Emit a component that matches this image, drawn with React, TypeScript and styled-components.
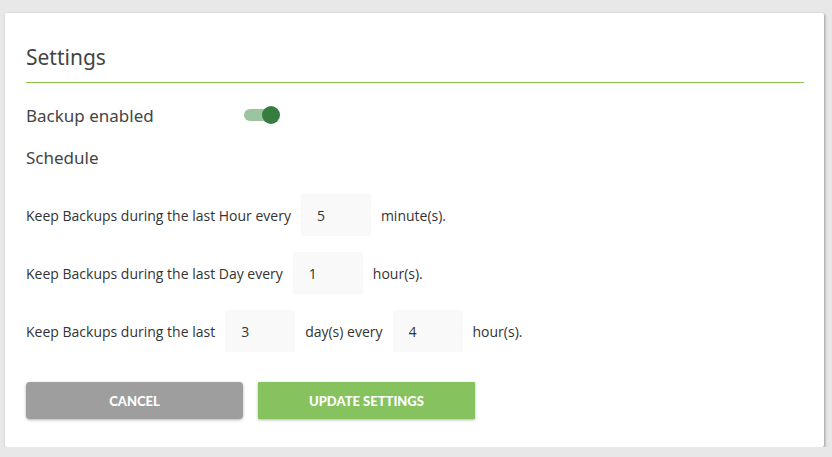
import React from 'react';
import styled, {createGlobalStyle} from "styled-components";

const GlobalStyle = createGlobalStyle`
  body {
    margin: 0;
    background: #e8e8e8;
    font-family: "Open Sans", sans-serif;
  }
`

const Card = styled.div`
  margin: 13px 0 0 5px;
  width: 819px;
  box-sizing: border-box;
  padding: 32px 20px 28px 21px;
  background: #fff;
  border-radius: 2px;
  box-shadow: 1px 1px 3px rgba(0, 0, 0, 0.35);
`
const Title = styled.h2`
  margin: 0;
  padding-bottom: 13px;
  font-family: "Noto Sans", sans-serif;
  font-weight: 400;
  font-size: 21px;
  line-height: 24px;
  color: #444;
  border-bottom: 1px solid #8bc34a;
`
const ToggleRow = styled.div`
  display: flex;
  align-items: center;
  height: 30px;
  margin-top: 17px;
`
const Label = styled.span`
  width: 218px;
  font-family: "Noto Sans", sans-serif;
  font-size: 17px;
  color: #444;
`
const Track = styled.span<{ $on: boolean }>`
  position: relative;
  display: inline-block;
  width: 32px;
  height: 12px;
  border-radius: 6px;
  background: ${p => p.$on ? '#9bc49f' : '#ccc'};

  &::after {
    content: "";
    position: absolute;
    top: -3px;
    left: ${p => p.$on ? '18px' : '-1px'};
    width: 18px;
    height: 18px;
    border-radius: 50%;
    background: ${p => p.$on ? '#357e40' : '#f1f1f1'};
  }
`
const Subtitle = styled.h3`
  margin: 16px 0 0;
  font-family: "Noto Sans", sans-serif;
  font-weight: 400;
  font-size: 17px;
  line-height: 24px;
  color: #444;
`
const Rows = styled.div`
  margin-top: 24px;
  display: flex;
  flex-direction: column;
  gap: 16px;
`
const Row = styled.div`
  display: flex;
  align-items: center;
  gap: 10px;
  font-size: 14px;
  color: #333;
`
const NumberBox = styled.input`
  width: 70px;
  height: 42px;
  box-sizing: border-box;
  padding: 0 16px;
  border: none;
  background: #f9f9f9;
  font-family: "Open Sans", sans-serif;
  font-size: 14px;
  color: #333;
  outline: none;
`
const Actions = styled.div`
  display: flex;
  gap: 15px;
  margin-top: 30px;
`
const Button = styled.button<{ $primary?: boolean }>`
  width: 217px;
  height: 37px;
  border: none;
  border-radius: ${p => p.$primary ? '1px' : '4px'};
  background: ${p => p.$primary ? '#86c35e' : '#9e9e9e'};
  color: #fff;
  font-family: Lato, sans-serif;
  font-weight: 900;
  font-size: 13px;
  text-transform: uppercase;
  box-shadow: 0 1px 3px rgba(0, 0, 0, 0.3);
`

export default function App() {
    return (
        <>
            <GlobalStyle/>
            <Card>
                <Title>Settings</Title>
                <ToggleRow>
                    <Label>Backup enabled</Label>
                    <Track $on={true}/>
                </ToggleRow>
                <Subtitle>Schedule</Subtitle>
                <Rows>
                    <Row>
                        Keep Backups during the last Hour every
                        <NumberBox defaultValue="5"/>
                        minute(s).
                    </Row>
                    <Row>
                        Keep Backups during the last Day every
                        <NumberBox defaultValue="1"/>
                        hour(s).
                    </Row>
                    <Row>
                        Keep Backups during the last
                        <NumberBox defaultValue="3"/>
                        day(s) every
                        <NumberBox defaultValue="4"/>
                        hour(s).
                    </Row>
                </Rows>
                <Actions>
                    <Button>Cancel</Button>
                    <Button $primary>Update settings</Button>
                </Actions>
            </Card>
        </>
    );
}
